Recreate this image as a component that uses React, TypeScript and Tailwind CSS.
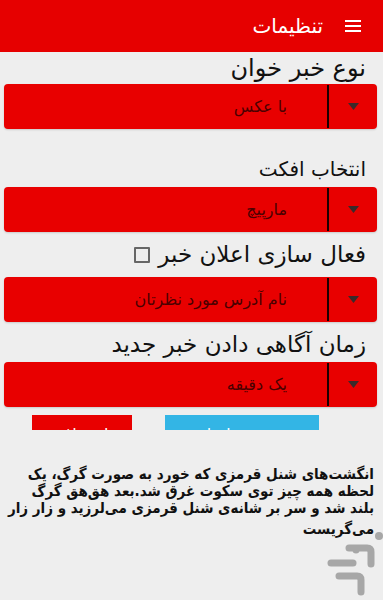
import React from 'react'

const font = { fontFamily: '"DejaVu Sans", "Noto Sans", sans-serif' }

function Spinner({ value }: { value: string }) {
  return (
    <div className="ml-[4px] mr-[6px] flex h-[45px] rounded-[4px] bg-[#e80000] shadow-[0_1px_2px_rgba(0,0,0,0.15)]">
      <div className="flex w-[48px] items-center justify-center">
        <svg width="11" height="7" viewBox="0 0 11 7">
          <path d="M0 0 L11 0 L5.5 7 Z" fill="#3a2a2a" />
        </svg>
      </div>
      <div className="my-[1px] w-[2px] bg-[#1a0000]" />
      <div className="flex flex-1 items-center justify-start pr-[40px] text-[16px] text-[#4a0000]">
        {value}
      </div>
    </div>
  )
}

function Watermark() {
  return (
    <svg
      className="absolute right-0 top-[528px]"
      width="60"
      height="72"
      viewBox="0 0 60 72"
      fill="none"
    >
      <g stroke="#a0a0a0" strokeWidth="7" strokeLinecap="round" strokeLinejoin="round" opacity="0.9">
        <circle cx="56" cy="8" r="4" fill="#a0a0a0" stroke="none" />
        <circle cx="33" cy="22" r="3.5" fill="#a0a0a0" stroke="none" />
        <path d="M26 20 H44 Q48 20 48 24 V36" />
        <path d="M8 35 H30" />
        <path d="M16 48 H34 Q38 48 38 52 V64" />
      </g>
    </svg>
  )
}

export default function App() {
  return (
    <div dir="rtl" className="relative h-[600px] w-[383px] overflow-hidden bg-[#eeeeee]" style={font}>
      {/* toolbar */}
      <div className="flex h-[52px] items-center bg-[#e60000] pr-[22px] text-white">
        <svg width="16" height="12" viewBox="0 0 16 12">
          <rect x="0" y="0" width="16" height="2" fill="white" />
          <rect x="0" y="5" width="16" height="2" fill="white" />
          <rect x="0" y="10" width="16" height="2" fill="white" />
        </svg>
        <span className="mr-[22px] text-[20px] leading-none">تنظیمات</span>
      </div>

      {/* settings scroll area */}
      <div className="h-[378px] overflow-hidden">
        <div className="flex h-[32px] items-end pr-[17px] text-[24px] leading-[32px] text-[#111]">
          نوع خبر خوان
        </div>
        <Spinner value="با عکس" />

        <div className="flex h-[58px] items-end pb-[8px] pr-[17px] text-[20px] leading-none text-[#111]">
          انتخاب افکت
        </div>
        <Spinner value="مارپیچ" />

        <div className="flex h-[45px] items-center gap-[8px] pr-[17px] text-[23px] text-[#111]">
          <span>فعال سازی اعلان خبر</span>
          <span className="h-[16px] w-[16px] rounded-[1px] border-2 border-[#666]" />
        </div>
        <Spinner value="نام آدرس مورد نظرتان" />

        <div className="flex h-[40px] items-center pr-[17px] pt-[4px] text-[23px] text-[#111]">
          زمان آگاهی دادن خبر جدید
        </div>
        <Spinner value="یک دقیقه" />

        <div className="mt-[8px] flex flex-row-reverse">
          <div className="ml-[32px] flex h-[40px] w-[100px] items-center justify-center bg-[#e80000] text-[16px] text-white">
            انصراف
          </div>
          <div className="ml-[33px] flex h-[40px] w-[154px] items-center justify-center bg-[#33b5e5] text-[16px] text-white">
            ذخیره تنظیمات
          </div>
        </div>
      </div>

      {/* story text */}
      <div className="ml-[32px] mr-[9px] mt-[36px] whitespace-nowrap text-[15px] font-bold font-stretch-condensed leading-[17px] text-[#111]">
        <div className="text-justify [text-align-last:justify]">انگشت‌های شنل قرمزی که خورد به صورت گرگ، یک</div>
        <div className="text-justify [text-align-last:justify]">لحظه همه چیز توی سکوت غرق شد.بعد هق‌هق گرگ</div>
        <div className="text-justify [text-align-last:justify]">بلند شد و سر بر شانه‌ی شنل قرمزی می‌لرزید و زار زار</div>
        <div className="mt-[4px]">می‌گریست</div>
      </div>

      <Watermark />
    </div>
  )
}
